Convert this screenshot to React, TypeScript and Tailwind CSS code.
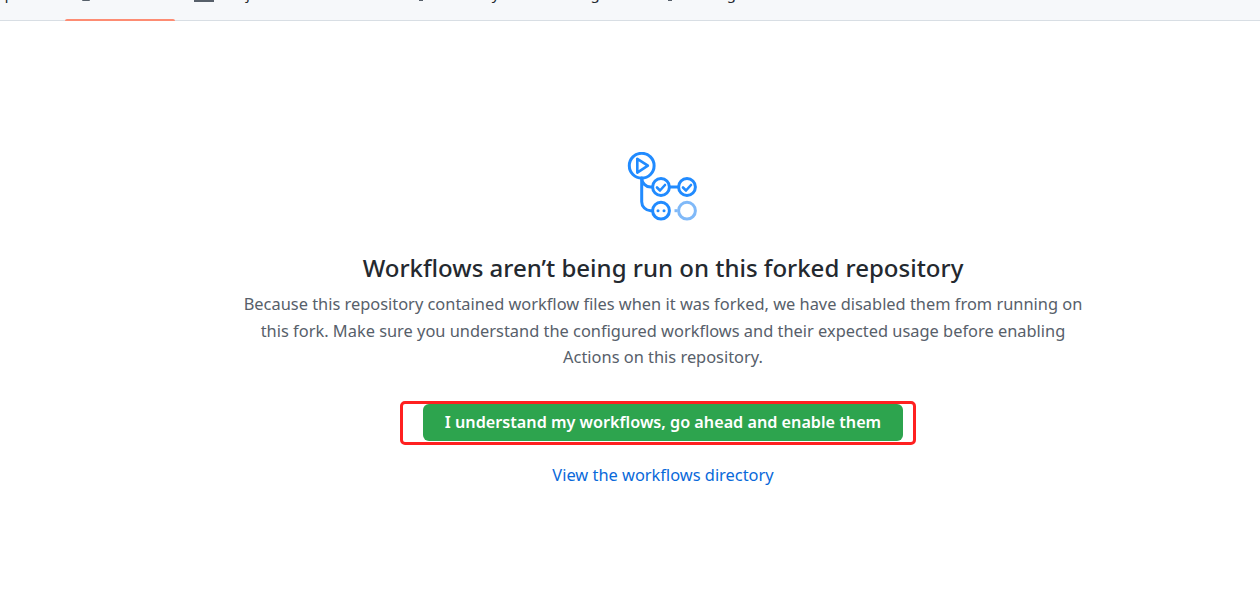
function WorkflowIcon() {
  return (
    <svg width="72" height="72" viewBox="0 0 72 72" fill="none" className="block">
      <g stroke="#218bff" strokeWidth="3" strokeLinecap="round">
        <circle cx="14.7" cy="13.7" r="12.4" />
        <path d="M10.3 6.8v13.8l10.6-6.9z" strokeLinejoin="round" strokeWidth="2.6" />
        <path d="M14.7 27v22.7a9 9 0 0 0 9 9h1.3" />
        <path d="M14.7 26a9 9 0 0 0 9 9h1.3" />
        <circle cx="34" cy="35" r="8.4" />
        <circle cx="60" cy="35" r="8.4" />
        <circle cx="34" cy="58.7" r="8.4" />
        <path d="M43 35h8" />
        <path d="M30 35.5l3 3 5-5.5" strokeLinejoin="round" strokeWidth="2.6" />
        <path d="M56 35.5l3 3 5-5.5" strokeLinejoin="round" strokeWidth="2.6" />
      </g>
      <circle cx="31" cy="58.7" r="1.5" fill="#218bff" />
      <circle cx="37" cy="58.7" r="1.5" fill="#218bff" />
      <g stroke="#80b9f8" strokeWidth="3">
        <circle cx="60" cy="58.7" r="8.4" />
        <path d="M47.5 58.7h3" />
      </g>
    </svg>
  );
}

const tabs = [
  { label: "Pull requests", icon: "", width: "w-[124px]", text: "ml-0" },
  { label: "Actions", icon: "ml-[3px] w-[8px] h-[1px] rounded-b-full", width: "w-[115px]", text: "ml-[9px]" },
  { label: "Projects", icon: "w-[20px] h-[2px]", width: "w-[222px]", text: "ml-[8px]" },
  { label: "Security", icon: "ml-[3px] w-[4px] h-[1px]", width: "w-[133px]", text: "ml-[20px]" },
  { label: "Insights", icon: "", width: "w-[119px]", text: "ml-[16px]" },
  { label: "Settings", icon: "w-[4px] h-[1px]", width: "w-[100px]", text: "ml-[14px]" },
];

export default function App() {
  return (
    <div className="min-h-[596px] bg-white font-['Noto_Sans',sans-serif]">
      {/* Repo nav, scrolled off the top so only descenders show */}
      <div className="relative h-[21px] bg-[#f6f8fa] border-b border-[#d8dee4]">
        <div className="h-[20px] overflow-hidden">
          <ul className="flex ml-[-45px]">
            {tabs.map((tab) => (
              <li key={tab.label} className={`${tab.width} flex items-start shrink-0`}>
                {tab.icon && <span className={`${tab.icon} block bg-[#57606a]`} />}
                <span className={`${tab.text} text-[15px] leading-[20px] mt-[-17px] whitespace-nowrap text-[#24292f]`}>
                  {tab.label}
                </span>
              </li>
            ))}
          </ul>
        </div>
        <div className="absolute left-[65px] bottom-[-1px] w-[110px] h-[2px] rounded-t-[2px] bg-[#fd8c73]" />
      </div>

      <div className="flex flex-col items-center pl-[66px] pt-[131px]">
        <WorkflowIcon />
        <h2 className="mt-[26px] text-[24px] leading-[36px] font-medium text-[#24292f]">
          Workflows aren’t being run on this forked repository
        </h2>
        <p className="mt-[5px] w-[850px] text-center text-[16.4px] leading-[26.5px] text-[#57606a]">
          Because this repository contained workflow files when it was forked, we have disabled them from running on
          this fork. Make sure you understand the configured workflows and their expected usage before enabling
          Actions on this repository.
        </p>
        <div className="relative mt-[33px]">
          <button className="block h-[37px] w-[480px] rounded-[6px] bg-[#2da44e] text-white text-[16.2px] font-semibold">
            I understand my workflows, go ahead and enable them
          </button>
          {/* Red annotation box drawn over the screenshot */}
          <div className="absolute left-[-23px] right-[-13px] top-[-3px] bottom-[-4px] border-[3px] border-[#ff2020] rounded-[5px]" />
        </div>
        <a className="mt-[22px] text-[16.4px] leading-[24px] text-[#0969da]">View the workflows directory</a>
      </div>
    </div>
  );
}
